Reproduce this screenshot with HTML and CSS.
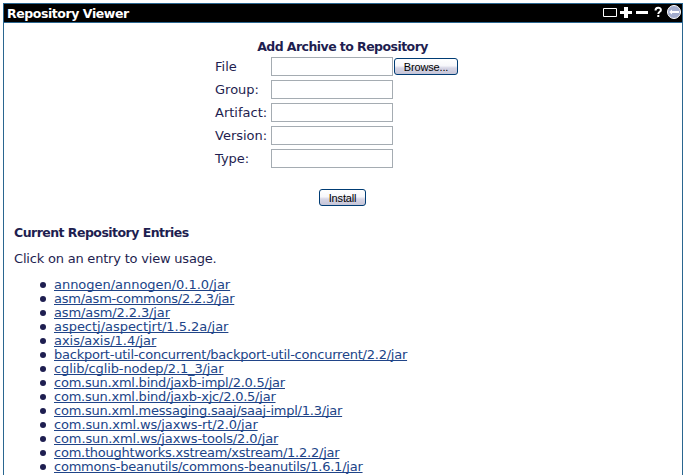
FILE: index.html
```
<!DOCTYPE html>
<html lang="en">
<head>
<meta charset="utf-8">
<title>Repository Viewer</title>
<link rel="stylesheet" href="styles.css">
</head>
<body>
<div class="portlet">
  <div class="titlebar">
    <span class="title">Repository Viewer</span>
    <svg class="controls" width="80" height="18" viewBox="0 0 80 18">
      <path d="M1.500 4.500h13v8h-13z" fill="none" stroke="#fff"/>
      <path d="M18 7h4V3h4v4h4v3h-4v4h-4v-4h-4z" fill="#fff"/>
      <path d="M34 7h12v3H34z" fill="#fff"/>
      <path d="M53.500 6.500c0-3.600 5.400-3.600 5.400-.5 0 2-2.600 1.600-2.600 4M56.300 11v2" fill="none" stroke="#fff" stroke-width="2"/>
      <circle cx="72" cy="8" r="6.500" fill="#a2accd" stroke="#fff"/>
      <path d="M67 8l3-2.500V7h7v2h-7v1.500z" fill="#fff"/>
    </svg>
  </div>
  <div class="content">
    <form class="upload">
      <div class="heading">Add Archive to Repository</div>
      <label class="row"><span class="label">File</span><input class="field" type="text"><button class="button browse" type="button">Browse...</button></label>
      <label class="row"><span class="label">Group:</span><input class="field" type="text"></label>
      <label class="row"><span class="label">Artifact:</span><input class="field" type="text"></label>
      <label class="row"><span class="label">Version:</span><input class="field" type="text"></label>
      <label class="row"><span class="label">Type:</span><input class="field" type="text"></label>
      <button class="button install" type="button">Install</button>
    </form>
    <p class="subtitle">Current Repository Entries</p>
    <p class="hint">Click on an entry to view usage.</p>
    <ul class="entries">
      <li><a href="#">annogen/annogen/0.1.0/jar</a></li>
      <li class="tight"><a href="#">asm/asm-commons/2.2.3/jar</a></li>
      <li class="snug"><a href="#">asm/asm/2.2.3/jar</a></li>
      <li><a href="#">aspectj/aspectjrt/1.5.2a/jar</a></li>
      <li><a href="#">axis/axis/1.4/jar</a></li>
      <li class="tight"><a href="#">backport-util-concurrent/backport-util-concurrent/2.2/jar</a></li>
      <li class="snug"><a href="#">cglib/cglib-nodep/2.1_3/jar</a></li>
      <li class="tight"><a href="#">com.sun.xml.bind/jaxb-impl/2.0.5/jar</a></li>
      <li class="tight"><a href="#">com.sun.xml.bind/jaxb-xjc/2.0.5/jar</a></li>
      <li class="tight"><a href="#">com.sun.xml.messaging.saaj/saaj-impl/1.3/jar</a></li>
      <li class="snug"><a href="#">com.sun.xml.ws/jaxws-rt/2.0/jar</a></li>
      <li class="snug"><a href="#">com.sun.xml.ws/jaxws-tools/2.0/jar</a></li>
      <li class="tight"><a href="#">com.thoughtworks.xstream/xstream/1.2.2/jar</a></li>
      <li class="tight"><a href="#">commons-beanutils/commons-beanutils/1.6.1/jar</a></li>
    </ul>
  </div>
</div>
</body>
</html>
```
FILE: styles.css
```
* { box-sizing: border-box; }
html, body { height: 100%; overflow: hidden; }
body {
  margin: 0;
  padding: 3px 10px 0 3px;
  background: #fff;
  color: #1e1e50;
  font: 13px/16px Verdana, "DejaVu Sans", sans-serif;
}
.portlet { height: 480px; border: 1px solid #2a6690; }
.titlebar {
  display: flex;
  justify-content: space-between;
  height: 19px;
  padding-left: 3px;
  background: #000;
  border-bottom: 1px solid #2a6690;
  color: #fff;
}
.title, .heading, .subtitle { font-size: 12.5px; font-weight: bold; }
.title { line-height: 20px; letter-spacing: -0.43px; }
.controls { display: block; }
.content { padding: 15px 10px 0; }
.upload { width: 243px; margin-left: 201px; }
.heading {
  width: 255px;
  height: 19px;
  line-height: 18px;
  text-align: center;
  letter-spacing: -0.55px;
  white-space: nowrap;
}
.row { display: flex; height: 19px; margin-bottom: 4px; }
.label { width: 56px; flex: none; line-height: 20px; }
.field {
  width: 122px;
  height: 19px;
  flex: none;
  margin: 0;
  padding: 0 2px;
  border: 1px solid #a5acb2;
  background: #fff;
}
.button {
  height: 17px;
  padding: 0;
  border: 1px solid #003c74;
  border-radius: 3px;
  background: linear-gradient(#fff 0%, #f7f7fb 45%, #d6d5e5 60%, #c6c5d7 100%);
  color: #000;
  font: 11px/16px "Liberation Sans", sans-serif;
}
.browse { width: 64px; margin: 1px 0 0 1px; flex: none; letter-spacing: -0.15px; }
.install { display: block; width: 47px; margin: 21px 0 0 104px; letter-spacing: -0.15px; }
.subtitle { margin: 19px 0 10px; letter-spacing: -0.53px; }
.hint { margin: 0 0 11px; letter-spacing: -0.2px; }
.entries { margin: 0; padding: 0 0 0 40px; list-style: none; line-height: 14px; }
.entries li { position: relative; height: 14px; letter-spacing: -0.03px; white-space: nowrap; }
.entries .snug { letter-spacing: -0.12px; }
.entries .tight { letter-spacing: -0.23px; }
.entries li::before {
  content: "";
  position: absolute;
  left: -14px;
  top: 4px;
  width: 6px;
  height: 6px;
  border-radius: 3px;
  background: #1e1e50;
}
.entries a {
  color: #204488;
  text-decoration-thickness: 1px;
  text-underline-offset: 1px;
  text-decoration-skip-ink: none;
}
```
